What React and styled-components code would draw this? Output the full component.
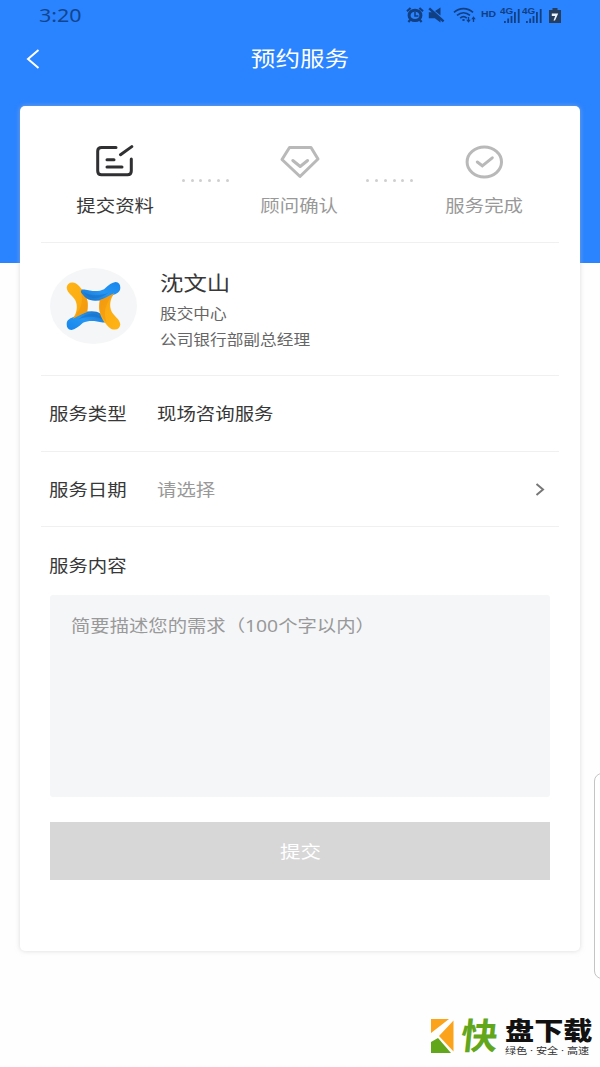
import React, { useState } from "react";
import styled, { createGlobalStyle } from "styled-components";

const GlobalStyle = createGlobalStyle`
  * {
    box-sizing: border-box;
  }

  body {
    margin: 0;
    background-color: #ffffff;
    font-family: "Noto Sans", "Noto Sans CJK SC", sans-serif;
  }
`;

const Page = styled.div`
  position: relative;
  display: flex;
  flex-direction: column;
  height: 1067px;
  overflow: hidden;
  background: linear-gradient(#2a83ff 263px, #fefefe 263px);
`;

const Text = styled.span`
  display: inline-block;
  white-space: nowrap;
  font-size: ${(props) => props.$size || 16.6}px;
  font-weight: ${(props) => props.$weight || 400};
  line-height: ${(props) => props.$line || 24}px;
  color: ${(props) => props.$color || "#383838"};
  transform: scaleX(${(props) => props.$stretch || 1.17});
  transform-origin: ${(props) => props.$origin || "left"} center;
`;

const StatusBar = styled.div`
  display: flex;
  justify-content: space-between;
  align-items: center;
  height: 30px;
  padding: 0 39px 0 39px;
`;

const StatusIcons = styled.div`
  display: flex;
  align-items: center;
  height: 30px;
  color: #113f83;
`;

const NavBar = styled.div`
  display: grid;
  grid-template-columns: 60px 1fr 61px;
  align-items: center;
  justify-items: center;
  height: 56px;
`;

const BackButton = styled.button`
  display: flex;
  justify-self: start;
  padding: 1px 0 0 26px;
  border: none;
  background-color: transparent;
  cursor: pointer;
`;

const Card = styled.div`
  display: flex;
  flex-direction: column;
  height: 845px;
  margin: 20px 20px 0;
  padding: 0 21px;
  border-radius: 5px;
  background-color: #ffffff;
  box-shadow: 0 0 5px rgba(190, 190, 190, 0.55);
`;

const Steps = styled.div`
  display: flex;
  justify-content: center;
  height: 137px;
  padding: 37px 1px 0 0;
  border-bottom: 1px solid #f0f0f0;
`;

const StepWrapper = styled.div`
  display: flex;
  flex-direction: column;
  align-items: center;
  width: 100px;
`;

const StepIcon = styled.div`
  display: flex;
  align-items: center;
  justify-content: center;
  height: 38px;
  margin-bottom: 13px;
`;

const Dots = styled.div`
  display: flex;
  justify-content: space-between;
  width: 47px;
  margin: 36px 20.75px 0 16.75px;
`;

const Dot = styled.span`
  width: 3px;
  height: 3px;
  border-radius: 50%;
  background-color: #cfcfcf;
`;

const Profile = styled.div`
  display: flex;
  align-items: flex-start;
  height: 133px;
  padding: 25px 9px 0;
  border-bottom: 1px solid #f0f0f0;
`;

const Avatar = styled.div`
  display: flex;
  align-items: center;
  justify-content: center;
  width: 87px;
  height: 76px;
  margin-right: 23px;
  border-radius: 50%;
  background-color: #f5f6f7;
`;

const ProfileInfo = styled.div`
  display: flex;
  flex-direction: column;
  align-items: flex-start;
  margin-top: -2px;
`;

const Row = styled.div`
  display: flex;
  align-items: center;
  height: 75.5px;
  padding: 2px 14px 0 8px;
  border-bottom: ${(props) => (props.$last ? "none" : "1px solid #f0f0f0")};
`;

const RowLabel = styled.div`
  width: 108px;
`;

const RowValue = styled.div`
  flex: 1;
`;

const Description = styled.div`
  height: 202px;
  margin: -8px 9px 0;
  padding: 19px 21px;
  border-radius: 3px;
  background-color: #f5f6f8;
`;

const SubmitButton = styled.button`
  height: 58px;
  margin: 25px 9px 0;
  border: none;
  background-color: #d7d7d7;
  font-family: inherit;
`;

const SideHandle = styled.div`
  position: absolute;
  top: 773px;
  right: -10px;
  width: 16px;
  height: 206px;
  border: 1px solid #c4c4c4;
  border-radius: 8px;
  background-color: #ffffff;
`;

const Footer = styled.div`
  display: flex;
  justify-content: flex-end;
  align-items: flex-start;
  margin-top: 67px;
  padding-right: 6px;
`;

const FooterMark = styled.div`
  width: 37px;
  margin: 0 7px 0 6px;
  transform: skewX(-6deg);
`;

const FooterText = styled.div`
  display: flex;
  flex-direction: column;
  gap: 2px;
  width: 89px;
`;

const HdLabel = styled.span`
  width: 19px;
  margin-left: 5px;
  font: bold 9.5px/10px "Liberation Sans", sans-serif;
  transform: translateY(-1px) scaleX(1.1);
  transform-origin: left center;
`;

const SignalWrapper = styled.div`
  display: flex;
  width: 22px;
  height: 17px;
`;

const SignalLabel = styled.span`
  width: 4px;
  font: bold 9px/8px "Liberation Sans", sans-serif;
  transform: scaleX(1.1);
  transform-origin: left center;
`;

const IconGap = styled.span`
  width: ${(props) => props.$width}px;
`;

function AlarmIcon() {
  return (
    <svg width="18" height="16" viewBox="0 0 18 16" fill="none">
      <ellipse cx="9" cy="8.4" rx="5.9" ry="5.2" stroke="currentColor" strokeWidth="3" />
      <path d="M1 4.2 4.6 1M17 4.2 13.4 1M4.3 12.8 2.4 15M13.7 12.8l1.9 2.2" stroke="currentColor" strokeWidth="2.2" />
      <path d="M9 5v4h3.4" stroke="currentColor" strokeWidth="1.5" />
    </svg>
  );
}

function MuteIcon() {
  return (
    <svg width="17" height="16" viewBox="0 0 17 16" fill="currentColor">
      <path d="M.8 5.2h4L12.5 12v3.4L6.8 11.2h-6zM7 4l5.5-3.4v8z" />
      <path d="M1.2 1.4 15.6 14.4" stroke="currentColor" strokeWidth="2.4" />
    </svg>
  );
}

function WifiIcon() {
  return (
    <svg width="23" height="17" viewBox="0 0 23 17" fill="none" stroke="currentColor" strokeWidth="1.7">
      <path d="M1 5.4C6.5.4 14.5.4 20 5.4M4 8.4c4-3.5 9-3.5 13 0M7.2 11.2c2-1.8 4.6-1.8 6.6 0" />
      <ellipse cx="10.5" cy="13" rx="1.3" ry="1" fill="currentColor" stroke="none" />
      <path d="M15.5 10v4M20.5 15v-4" strokeWidth="1.3" />
      <path d="m13.2 12.8 2.3 3 2.3-3zM18.3 12.2l2.2-3 2.2 3z" fill="currentColor" stroke="none" />
    </svg>
  );
}

function Signal() {
  return (
    <SignalWrapper>
      <SignalLabel>4G</SignalLabel>
      <svg width="17" height="17" viewBox="0 0 17 17" fill="currentColor">
        <path d="M0 14h1.8v2H0zM3.3 11.5h1.8V16H3.3zM6.6 9h1.8v7H6.6zM10 5h1.8v11H10zM13.8 2h1.8v14h-1.8z" />
      </svg>
    </SignalWrapper>
  );
}

function BatteryIcon() {
  return (
    <svg width="12" height="16" viewBox="0 0 12 16">
      <path d="M3.5 1h5v2H12v13H0V3h3.5z" fill="#263e60" />
      <path d="M2.8 6.5h6.400L6 13.500H4.500l1.700-4.500H2.800z" fill="#eaf4ff" />
    </svg>
  );
}

function SubmitStepIcon() {
  return (
    <svg width="38" height="34" viewBox="0 0 38 34" fill="none" stroke="#303033" strokeWidth="3" strokeLinecap="round">
      <path d="M20 2.5H5.5Q1.7 2.5 1.7 6v20q0 3.8 3.8 3.8h26q3.8 0 3.8-3.8V14" />
      <path d="M24.5 9.7 35.8 1.6M11 14.7h7M11 22h15" />
    </svg>
  );
}

function ConfirmStepIcon() {
  return (
    <svg width="40" height="34" viewBox="0 0 40 34" fill="none" stroke="#b9b9b9" strokeWidth="3" strokeLinejoin="round" strokeLinecap="round">
      <path d="M9.5 2.5H31L38 14 20 31.500 2 14.500z" />
      <path d="m12.800 15.500 7.400 6 7.400-6" />
    </svg>
  );
}

function DoneStepIcon() {
  return (
    <svg width="38" height="34" viewBox="0 0 38 34" fill="none" stroke="#b9b9b9" strokeWidth="3" strokeLinecap="round">
      <ellipse cx="19.3" cy="17" rx="17.2" ry="15" />
      <path d="m12.300 17 5 3.800 10-8" />
    </svg>
  );
}

function CompanyLogo() {
  return (
    <svg width="55" height="48" viewBox="0 0 162 141">
      <defs>
        <linearGradient id="gold" x1="0" y1="0" x2="1" y2="1">
          <stop offset="0" stopColor="#ffb416" />
          <stop offset="0.6" stopColor="#fbac12" />
          <stop offset="1" stopColor="#f0990f" />
        </linearGradient>
        <linearGradient id="azure" x1="0" y1="1" x2="1" y2="0">
          <stop offset="0" stopColor="#1685ed" />
          <stop offset="0.5" stopColor="#2696f3" />
          <stop offset="1" stopColor="#176fc4" />
        </linearGradient>
        <g id="pair">
          <path
            fill="url(#azure)"
            d="M2 124C2 110 14 107 26 101C42 91 56 86 76 86C98 86 106 96 116 108C121 115 116 121 108 119C86 114 66 112 50 120C36 133 26 140 16 141C6 140 2 134 2 124Z"
          />
          <path fill="#1770c8" opacity="0.55" d="M36 110C58 92 90 84 111 112C88 98 60 100 36 110Z" />
          <path
            fill="url(#gold)"
            d="M18 1C32 0 38 12 49 23C64 44 67 62 62 88C50 92 38 98 20 108C32 92 36 70 27 53C20 40 3 32 2 16C3 7 9 1 18 1Z"
          />
          <path fill="#f2980f" opacity="0.65" d="M43 22C50 46 52 72 22 107C38 98 50 92 62 88C68 64 62 44 43 22Z" />
        </g>
      </defs>
      <use href="#pair" />
      <use href="#pair" transform="rotate(180 81 70.5)" />
    </svg>
  );
}

function FooterLogo() {
  return (
    <svg width="24" height="36" viewBox="0 0 24 36">
      <path d="M0 1h18L0 15zM22.500 2.500v31L8 18z" fill="#fba31b" />
      <path d="M0 35V24l7-4 13 15z" fill="#62a61c" />
    </svg>
  );
}

function Step({ icon, label, color }) {
  return (
    <StepWrapper>
      <StepIcon>{icon}</StepIcon>
      <Text $origin="center" $color={color}>
        {label}
      </Text>
    </StepWrapper>
  );
}

function StepDots() {
  return (
    <Dots>
      {[0, 1, 2, 3, 4, 5].map((dot) => (
        <Dot key={dot} />
      ))}
    </Dots>
  );
}

function FormRow({ label, value, valueColor, last, children }) {
  return (
    <Row $last={last}>
      <RowLabel>
        <Text>{label}</Text>
      </RowLabel>
      <RowValue>{value && <Text $color={valueColor}>{value}</Text>}</RowValue>
      {children}
    </Row>
  );
}

function App() {
  const [submitted, setSubmitted] = useState(false);

  return (
    <Page>
      <GlobalStyle />
      <StatusBar>
        <Text $size={18} $color="#12458f" $stretch={1.19}>
          3:20
        </Text>
        <StatusIcons>
          <AlarmIcon />
          <IconGap $width={4} />
          <MuteIcon />
          <IconGap $width={8} />
          <WifiIcon />
          <HdLabel>HD</HdLabel>
          <Signal />
          <Signal />
          <IconGap $width={5} />
          <BatteryIcon />
        </StatusIcons>
      </StatusBar>

      <NavBar>
        <BackButton>
          <svg width="14" height="20" viewBox="0 0 14 20" fill="none" stroke="#ffffff" strokeWidth="2">
            <path d="M12.5 1 2 10l10.5 9" />
          </svg>
        </BackButton>
        <Text $size={21} $color="#ffffff" $origin="center">
          预约服务
        </Text>
      </NavBar>

      <Card>
        <Steps>
          <Step icon={<SubmitStepIcon />} label="提交资料" />
          <StepDots />
          <Step icon={<ConfirmStepIcon />} label="顾问确认" color="#999999" />
          <StepDots />
          <Step icon={<DoneStepIcon />} label="服务完成" color="#999999" />
        </Steps>

        <Profile>
          <Avatar>
            <CompanyLogo />
          </Avatar>
          <ProfileInfo>
            <Text $size={20} $line={35}>
              沈文山
            </Text>
            <Text $size={14.25} $line={26} $color="#666666">
              股交中心
            </Text>
            <Text $size={14.25} $line={25} $color="#666666">
              公司银行部副总经理
            </Text>
          </ProfileInfo>
        </Profile>

        <FormRow label="服务类型" value="现场咨询服务" />
        <FormRow label="服务日期" value="请选择" valueColor="#999999">
          <svg width="10" height="14" viewBox="0 0 10 14" fill="none" stroke="#777777" strokeWidth="2">
            <path d="m1.5 1 6.5 5.5L1.5 12" />
          </svg>
        </FormRow>
        <FormRow label="服务内容" last />

        <Description>
          <Text $color="#999999" $stretch={1.165}>
            简要描述您的需求（100个字以内）
          </Text>
        </Description>

        <SubmitButton onClick={() => setSubmitted(true)} disabled={submitted}>
          <Text $size={17.5} $color="#ffffff" $origin="center">
            提交
          </Text>
        </SubmitButton>
      </Card>

      <SideHandle />

      <Footer>
        <FooterLogo />
        <FooterMark>
          <Text $size={36} $weight={700} $line={36} $color="#62a61c" $stretch={1.02}>
            快
          </Text>
        </FooterMark>
        <FooterText>
          <Text $size={24.5} $weight={900} $line={25} $color="#111111" $stretch={1.19}>
            盘下载
          </Text>
          <Text $size={9.5} $line={11} $color="#333333" $stretch={1.17}>
            绿色 · 安全 · 高速
          </Text>
        </FooterText>
      </Footer>
    </Page>
  );
}

export default App;
